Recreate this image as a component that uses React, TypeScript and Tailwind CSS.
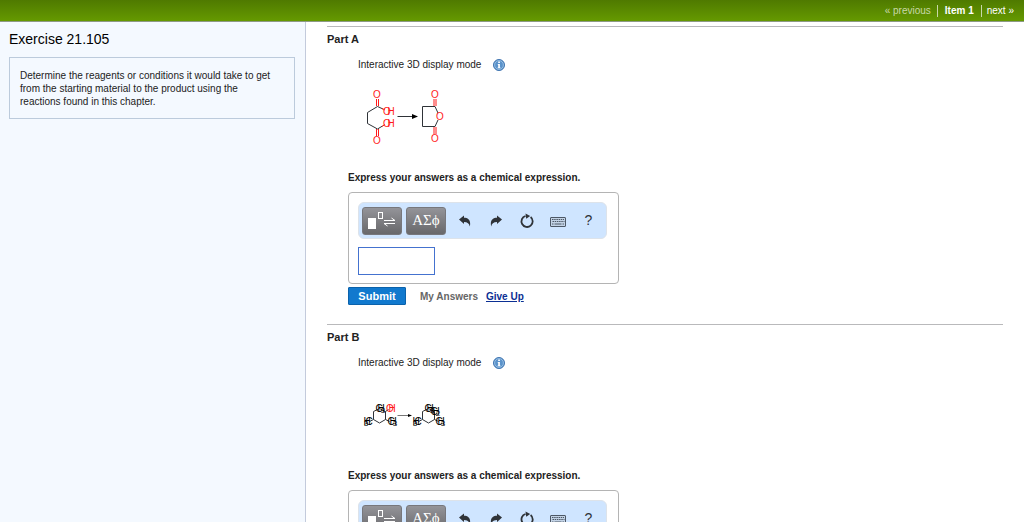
import type { ReactNode } from "react";

const GREY = "#2f3338";
const RED = "#ff1a1a";

type LabelProps = { x: number; y: number; size?: number; color?: string; children: ReactNode };

const Label = ({ x, y, size = 10, color = RED, children }: LabelProps) => (
  <text x={x} y={y} fontSize={size} fill={color} textAnchor="middle" dominantBaseline="central">
    {children}
  </text>
);

const InfoIcon = () => (
  <svg className="w-3 h-3" viewBox="0 0 12 12">
    <circle cx="6" cy="6" r="5.5" fill="#5b93cb" stroke="#3f74b0" strokeWidth="1" />
    <circle cx="6" cy="6" r="4.4" fill="none" stroke="#a9cbea" strokeWidth="0.7" />
    <path d="M5.2 2.6h1.7v1.5H5.2zM4.8 5h2.1v3.4h.6v.9H4.6v-.9h.6V5.9h-.4z" fill="#fff" />
  </svg>
);

const TemplateIcon = () => (
  <svg className="w-7 h-5" viewBox="0 0 28 20">
    <rect x="0" y="7" width="8" height="11" fill="#fff" />
    <rect x="10.5" y="1.5" width="4" height="6" fill="none" stroke="#fff" />
    <path d="M16 9.5h11L23.5 7M27 12.5H16l3.5 2.5" fill="none" stroke="#fff" />
  </svg>
);

const UndoIcon = () => (
  <svg className="w-3 h-3" viewBox="0 0 12 12">
    <path d="M0 4.6 5 .4v2.3c4.4 0 7.2 2.9 5.800 8.900C10.300 8.400 8.500 6.900 5 6.900v2.200z" fill={GREY} />
  </svg>
);

const RedoIcon = () => (
  <svg className="w-3 h-3" viewBox="0 0 12 12">
    <path d="M12 4.6 7 .4v2.3C2.600 2.700-.2 5.600 1.200 11.600 1.700 8.400 3.500 6.900 7 6.900v2.200z" fill={GREY} />
  </svg>
);

const ResetIcon = () => (
  <svg className="w-4 h-4" viewBox="0 0 16 16">
    <path d="M11.6 4A5.600 5.600 0 1 1 6.500 3" fill="none" stroke={GREY} strokeWidth="1.8" />
    <path d="M6.500 0.500 11.200 2.900 7.200 5.800z" fill={GREY} />
  </svg>
);

const KeyboardIcon = () => (
  <svg className="w-4 h-4" viewBox="0 0 16 16">
    <rect x="0.5" y="4.5" width="15" height="9" rx="0.5" fill="#c3d3e6" stroke="#4d5866" />
    <path d="M2 6.500h12M2.500 8.500h12" stroke="#4d5866" strokeDasharray="1.5 0.7" />
    <path d="M2 11h1.500M4.500 11h7M12.500 11H14" stroke="#4d5866" />
  </svg>
);

const ReactionA = () => (
  <svg className="w-[100px] h-[85px]" viewBox="0 0 100 85" role="img" aria-label="Reaction for Part A">
    <g fill="none" stroke={GREY}>
      <path d="M25 28 19.5 25.500 9.500 31.500v11l10 5.500 5-3" />
      <path d="M39.5 35.500H54" />
      <path d="M80 32 77 25.500H64.500v20H77l3-6.500" />
    </g>
    <path d="M54 33 60 35.500 54 38z" fill="#000" />
    <g fill="none" stroke={RED}>
      <path d="M18.500 18v7M20.500 18v7M18.500 48v7M20.500 48v7" />
      <path d="M76 18v7M78 18v7M76 46v7M78 46v7" />
      <path d="M24 27.500l3 1.500M24 45.500l3-2" />
    </g>
    <Label x={19} y={13}>O</Label>
    <Label x={29} y={30}>O</Label>
    <Label x={33} y={30}>H</Label>
    <Label x={29} y={42}>O</Label>
    <Label x={33} y={42}>H</Label>
    <Label x={19} y={59}>O</Label>
    <Label x={77} y={13}>O</Label>
    <Label x={82} y={35}>O</Label>
    <Label x={77} y={57}>O</Label>
  </svg>
);

type GroupProps = { x: number; y: number; first: string; second: string; sub?: string; subX?: number; color?: string };

// letters of a substituent overlap, with the subscript tucked under one of them
const Substituent = ({ x, y, first, second, sub, subX = 0, color = "#000" }: GroupProps) => (
  <g>
    <Label x={x - 1} y={y} color={color}>{first}</Label>
    <Label x={x + 1} y={y} color={color}>{second}</Label>
    {sub && <Label x={x + subX} y={y + 2} size={8} color={color}>{sub}</Label>}
  </g>
);

const ReactionB = () => (
  <svg className="w-[100px] h-[85px]" viewBox="0 0 100 85" role="img" aria-label="Reaction for Part B">
    <g fill="none" stroke={GREY}>
      <path d="M21.5 29.500 15.500 32.500v8l6 3.500 6-3.500v-8zM15.500 40.500l-4 2M27.500 40.500l4 2M27.500 32.500l3-2" />
      <path d="M39.5 36.500H50" stroke="#777" />
      <path d="M70.5 29.500 64.500 32.500v8l6 3.500 6-3.500v-8zM64.500 40.500l-4 2M76.500 40.500l4 2" />
    </g>
    <path d="M50 35 54 36.500 50 38z" fill="#000" />
    <Substituent x={22} y={29} first="C" second="H" sub="3" subX={3} />
    <Substituent x={33} y={29} first="O" second="H" color={RED} />
    <Substituent x={10} y={42} first="H" second="C" sub="3" subX={-2} />
    <Substituent x={34} y={42} first="C" second="H" sub="3" subX={3} />
    <Substituent x={71} y={29} first="C" second="H" sub="3" subX={3} />
    <Substituent x={77} y={32} first="C" second="H" sub="2" subX={3} />
    <Substituent x={59} y={42} first="H" second="C" sub="3" subX={-2} />
    <Substituent x={82} y={42} first="C" second="H" sub="3" subX={3} />
  </svg>
);

const paletteButton =
  "flex items-center justify-center w-10 h-7 rounded-[3px] border border-[#77777c] bg-linear-to-b from-[#949499] to-[#68686b] text-white";

const toolButton = "flex items-center justify-center w-[31px] h-7";

const AnswerEditor = ({ name }: { name: string }) => (
  <div className="w-[271px] h-[92px] px-[9px] pt-[9px] border border-[#b4b4b4] rounded">
    <div className="flex items-center w-[249px] h-[37px] pl-[3px] rounded-md border border-[#dde3ea] bg-[#cfe5ff]">
      <button type="button" aria-label="Templates" className={paletteButton}>
        <TemplateIcon />
      </button>
      <button
        type="button"
        aria-label="Greek symbols"
        className={`${paletteButton} ml-1 font-['Liberation_Serif',serif] text-[15px]`}
      >
        ΑΣϕ
      </button>
      <div className="flex ml-[3px]">
        <button type="button" aria-label="Undo" className={toolButton}><UndoIcon /></button>
        <button type="button" aria-label="Redo" className={toolButton}><RedoIcon /></button>
        <button type="button" aria-label="Reset" className={toolButton}><ResetIcon /></button>
        <button type="button" aria-label="Keyboard" className={toolButton}><KeyboardIcon /></button>
        <button type="button" aria-label="Help" className={`${toolButton} text-[14px] text-[#2f3338]`}>?</button>
      </div>
    </div>
    <input
      type="text"
      aria-label={`${name} answer`}
      className="block w-[77px] h-7 mt-2 px-1 border border-[#4472cf] bg-white outline-none"
    />
  </div>
);

const Part = ({ name, reaction }: { name: string; reaction: ReactNode }) => (
  <section className="h-[298px] shrink-0 pt-1 border-t border-[#b9b9bb]">
    <h2 className="text-[11px] leading-4 font-bold text-[#222]">{name}</h2>
    <div className="flex items-center gap-3 mt-[10px] ml-[31px] leading-4">
      Interactive 3D display mode
      <button type="button" aria-label="About the display mode"><InfoIcon /></button>
    </div>
    <div className="mt-2 mb-1 ml-[31px]">{reaction}</div>
    <div className="ml-[21px]">
      <p className="mb-[6px] leading-4 font-bold">Express your answers as a chemical expression.</p>
      <AnswerEditor name={name} />
      <div className="flex items-center mt-[3px] font-bold">
        <button
          type="button"
          className="w-[58px] h-[18px] rounded-[1px] border border-[#0b62ab] bg-[#1179ce] text-[11px] leading-4 text-white"
        >
          Submit
        </button>
        <span className="ml-[14px] text-[#666]">My Answers</span>
        <a href="#give-up" className="ml-2 text-[#0b2f93] underline">Give Up</a>
      </div>
    </div>
  </section>
);

const App = () => {
  return (
    <div className="flex flex-col h-screen overflow-hidden bg-white font-['Liberation_Sans',Arial,sans-serif] text-[10px] text-[#222]">
      <header className="flex items-center justify-end h-[22px] shrink-0 pr-[10px] border-b border-[#8d9a86] bg-linear-to-b from-[#4f7a00] to-[#659900]">
        <nav className="flex items-center leading-3 text-white">
          <a href="#previous" className="pr-[6px] text-[#c8d8a8]">« previous</a>
          <span className="px-[7px] border-x border-[#c8d8a8] font-bold">Item 1</span>
          <a href="#next" className="pl-[5px]">next »</a>
        </nav>
      </header>

      <div className="flex flex-1 min-h-0">
        {/* Exercise */}
        <aside className="w-[306px] shrink-0 pl-[9px] pr-[10px] pt-2 border-r border-[#c3cbdc] bg-[#f4f9ff]">
          <h1 className="text-[14px] leading-[18px] text-black">Exercise 21.105</h1>
          <p className="mt-[9px] pl-[10px] pr-4 pt-[11px] pb-[10px] border border-[#bccbdc] leading-[13px]">
            Determine the reagents or conditions it would take to get from the starting material to the product using
            the reactions found in this chapter.
          </p>
        </aside>

        {/* Parts */}
        <main className="flex-1 min-w-0 overflow-hidden pt-1 px-[21px]">
          <Part name="Part A" reaction={<ReactionA />} />
          <Part name="Part B" reaction={<ReactionB />} />
        </main>
      </div>
    </div>
  );
};

export default App;
